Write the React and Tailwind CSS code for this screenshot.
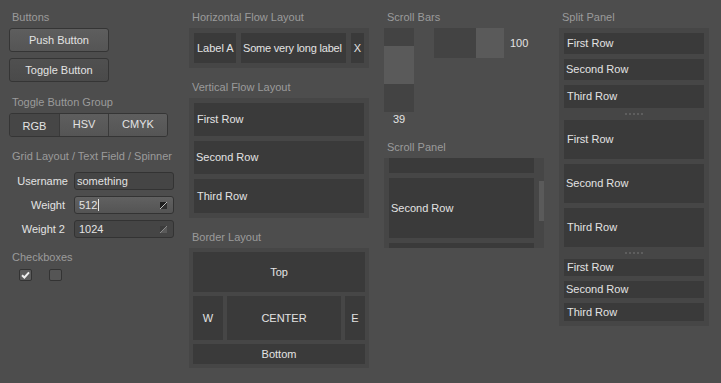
import React from "react";

const H = ({ children, className = "" }) => (
  <div className={"h-[14px] leading-[14px] pl-[3px] text-[#9b9b9b] whitespace-nowrap " + className}>{children}</div>
);

const Box = ({ children, className = "" }) => (
  <div className={"bg-[#3a3a3a] text-[#e3e3e3] flex items-center whitespace-nowrap overflow-hidden " + className}>{children}</div>
);

const Spin = ({ dark }) => (
  <svg width="7" height="7" viewBox="0 0 7 7" className="shrink-0">
    <rect x="0" y="0" width="7" height="7" fill={dark ? "#1f1f1f" : "#3c3c3c"} />
    <polygon points="7,0 7,7 0,7" fill={dark ? "#2e2e2e" : "#5a5a5a"} />
    <line x1="7" y1="0" x2="0" y2="7" stroke={dark ? "#bdbdbd" : "#8a8a8a"} strokeWidth="1" />
  </svg>
);

const Dots = () => (
  <div className="h-[12px] flex items-center justify-center gap-[2px]">
    {[0, 1, 2, 3, 4].map((i) => (
      <div key={i} className="w-[2px] h-[2px] bg-[#5e5e5e]" />
    ))}
  </div>
);

export default function App() {
  return (
    <div
      className="w-[721px] h-[383px] bg-[#4d4d4d] flex text-[11px] overflow-hidden"
      style={{ fontFamily: '"Liberation Sans", Arial, sans-serif' }}
    >
      {/* Column 1 */}
      <div className="ml-[9px] w-[180px] pt-[10px] flex flex-col shrink-0">
        <H className="mb-[4px]">Buttons</H>
        <div className="w-[100px] h-[24px] rounded-[3px] border border-[#353535] bg-gradient-to-b from-[#5e5e5e] to-[#555555] text-[#e3e3e3] flex items-center justify-center">
          Push Button
        </div>
        <div className="mt-[6px] w-[100px] h-[24px] rounded-[3px] border border-[#353535] bg-gradient-to-b from-[#505050] to-[#4a4a4a] text-[#e3e3e3] flex items-center justify-center">
          Toggle Button
        </div>
        <H className="mt-[13px] mb-[4px]">Toggle Button Group</H>
        <div className="w-[159px] h-[24px] rounded-[3px] border border-[#353535] flex overflow-hidden text-[#e3e3e3]">
          <div className="w-[49px] bg-[#464646] flex items-center justify-center pt-[2px]">RGB</div>
          <div className="w-[49px] bg-gradient-to-b from-[#5e5e5e] to-[#555555] border-l border-[#3a3a3a] flex items-center justify-center pb-[2px]">HSV</div>
          <div className="flex-1 bg-gradient-to-b from-[#5e5e5e] to-[#555555] border-l border-[#3a3a3a] flex items-center justify-center pb-[2px]">CMYK</div>
        </div>
        <H className="mt-[12px]">Grid Layout / Text Field / Spinner</H>
        <div className="mt-[9px] grid grid-cols-[59px_100px] gap-x-[6px] gap-y-[6px] text-[#e3e3e3]">
          <div className="h-[18px] flex items-center justify-end">Username</div>
          <div className="h-[18px] rounded-[3px] border border-[#333333] bg-[#454545] flex items-center pl-[2px]">something</div>
          <div className="h-[18px] flex items-center justify-end pr-[3px]">Weight</div>
          <div className="h-[18px] rounded-[3px] border border-[#333333] bg-gradient-to-b from-[#616161] to-[#545454] flex items-center pl-[4px] pr-[6px]">
            <span>512</span>
            <span className="w-px h-[12px] bg-[#e6e6e6] ml-[1px]" />
            <span className="flex-1" />
            <Spin dark />
          </div>
          <div className="h-[18px] flex items-center justify-end pr-[3px]">Weight 2</div>
          <div className="h-[18px] rounded-[3px] border border-[#333333] bg-[#454545] flex items-center pl-[4px] pr-[6px]">
            <span>1024</span>
            <span className="flex-1" />
            <Spin />
          </div>
        </div>
        <H className="mt-[12px] mb-[5px]">Checkboxes</H>
        <div className="flex ml-[10px] gap-[17px]">
          <div className="w-[13px] h-[12px] rounded-[2px] border border-[#333333] bg-[#5c5c5c] flex items-center justify-center">
            <svg width="9" height="8" viewBox="0 0 9 8">
              <path d="M1 4.2 L3.4 6.5 L8 1.3" stroke="#eeeeee" strokeWidth="2" fill="none" />
            </svg>
          </div>
          <div className="w-[13px] h-[12px] rounded-[2px] border border-[#333333] bg-[#555555]" />
        </div>
      </div>

      {/* Column 2 */}
      <div className="w-[195px] pt-[10px] flex flex-col shrink-0">
        <H className="mb-[4px]">Horizontal Flow Layout</H>
        <div className="w-[180px] h-[40px] bg-[#464646] p-[5px] flex gap-[5px]">
          <Box className="w-[42px] h-[30px] px-[3px]">Label A</Box>
          <Box className="w-[105px] h-[30px] px-[2px] tracking-[-0.2px]">Some very long label</Box>
          <Box className="w-[13px] h-[30px] justify-center">X</Box>
        </div>
        <H className="mt-[12px] mb-[4px]">Vertical Flow Layout</H>
        <div className="w-[180px] h-[120px] bg-[#464646] p-[5px] flex flex-col gap-[5px]">
          <Box className="h-[33px] px-[3px]">First Row</Box>
          <Box className="h-[33px] px-[2px]">Second Row</Box>
          <Box className="h-[34px] px-[3px]">Third Row</Box>
        </div>
        <H className="mt-[12px] mb-[4px]">Border Layout</H>
        <div className="w-[180px] h-[120px] bg-[#464646] p-[4px] flex flex-col gap-[4px]">
          <Box className="h-[40px] justify-center">Top</Box>
          <div className="h-[44px] flex gap-[4px]">
            <Box className="w-[30px] justify-center">W</Box>
            <Box className="w-[114px] justify-center">CENTER</Box>
            <Box className="w-[20px] justify-center">E</Box>
          </div>
          <Box className="h-[20px] justify-center">Bottom</Box>
        </div>
      </div>

      {/* Column 3 */}
      <div className="w-[175px] pt-[10px] flex flex-col shrink-0">
        <H className="mb-[4px] pl-[2px]">Scroll Bars</H>
        <div className="flex items-start">
          <div className="w-[30px] flex flex-col">
            <div className="h-[84px] bg-[#434343] flex flex-col">
              <div className="h-[18px]" />
              <div className="h-[38px] bg-[#5a5a5a]" />
            </div>
          </div>
          <div className="ml-[20px] w-[70px] h-[30px] bg-[#434343] flex">
            <div className="w-[42px]" />
            <div className="flex-1 bg-[#5a5a5a]" />
          </div>
          <div className="ml-[6px] h-[30px] leading-[30px] text-[#e3e3e3]">100</div>
        </div>
        <div className="w-[30px] h-[14px] leading-[14px] text-center text-[#e3e3e3]">39</div>
        <H className="mt-[14px] mb-[4px] pl-[2px]">Scroll Panel</H>
        <div className="relative w-[160px] h-[90px] bg-[#464646] overflow-hidden pl-[5px] pr-[10px]">
          <div className="mt-[-45px] flex flex-col gap-[5px]">
            <Box className="h-[60px] px-[2px]" />
            <Box className="h-[60px] px-[2px]">Second Row</Box>
            <Box className="h-[60px] px-[2px]" />
          </div>
          <div className="absolute right-0 top-[23px] w-[5px] h-[40px] bg-[#5a5a5a]" />
        </div>
      </div>

      {/* Column 4 */}
      <div className="w-[150px] pt-[10px] flex flex-col shrink-0">
        <H className="mb-[4px]">Split Panel</H>
        <div className="w-[150px] h-[298px] bg-[#464646] p-[5px] flex flex-col">
          <div className="flex flex-col gap-[5px]">
            <Box className="h-[21px] px-[3px]">First Row</Box>
            <Box className="h-[21px] px-[2px]">Second Row</Box>
            <Box className="h-[23px] px-[3px]">Third Row</Box>
          </div>
          <Dots />
          <div className="flex flex-col gap-[5px]">
            <Box className="h-[39px] px-[3px]">First Row</Box>
            <Box className="h-[39px] px-[2px]">Second Row</Box>
            <Box className="h-[39px] px-[3px]">Third Row</Box>
          </div>
          <Dots />
          <div className="flex flex-col gap-[5px]">
            <Box className="h-[17px] px-[3px]">First Row</Box>
            <Box className="h-[17px] px-[2px]">Second Row</Box>
            <Box className="h-[18px] px-[3px]">Third Row</Box>
          </div>
        </div>
      </div>
    </div>
  );
}
